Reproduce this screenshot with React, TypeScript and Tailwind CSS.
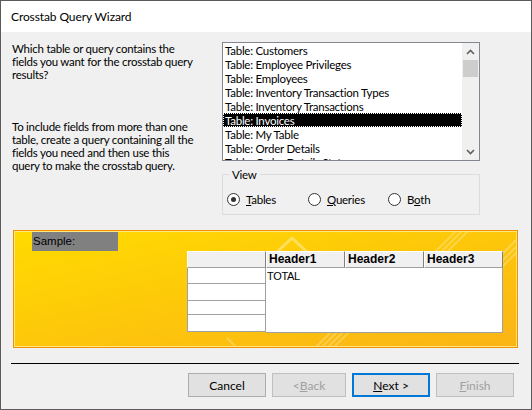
import type { ReactNode } from 'react';

const tables = [
  'Table: Customers',
  'Table: Employee Privileges',
  'Table: Employees',
  'Table: Inventory Transaction Types',
  'Table: Inventory Transactions',
  'Table: Invoices',
  'Table: My Table',
  'Table: Order Details',
  'Table: Order Details Status',
];

const Radio = ({ checked, children, width }: { checked?: boolean; children: ReactNode; width: string }) => (
  <div className={`flex items-center ${width}`}>
    <span className="flex h-[13px] w-[13px] items-center justify-center rounded-full border border-[#333] bg-white">
      {checked && <span className="h-[5px] w-[5px] rounded-full bg-[#333]" />}
    </span>
    <span className="ml-[6px]">{children}</span>
  </div>
);

const Button = ({ children, disabled, primary, width }: { children: ReactNode; disabled?: boolean; primary?: boolean; width: string }) => (
  <div
    className={`flex h-[24px] items-center justify-center bg-[#e1e1e1] ${width} ${
      primary ? 'border-2 border-[#0078d7]' : disabled ? 'border border-[#bfbfbf]' : 'border border-[#adadad]'
    } ${disabled ? 'text-[#a0a0a0]' : 'text-black'}`}
  >
    {children}
  </div>
);

const HeaderCell = ({ label }: { label?: string }) => (
  <div className="flex h-[17px] w-[79px] items-center border-b border-r border-l border-t border-b-[#a0a0a0] border-r-[#808080] border-l-white border-t-white bg-[#f0f0f0] pl-[2px] font-bold text-[12px]">
    {label}
  </div>
);

const rowHeights = ['h-[16px]', 'h-[17px]', 'h-[14px]', 'h-[17px]'];

export default function App() {
  return (
    <div className="flex h-[410px] w-[532px] flex-col overflow-hidden border border-[#5b5b5b] bg-[#f0f0f0] font-['Lato',sans-serif] text-[11.5px] leading-[13px] tracking-[-0.25px] text-black">
      <div className="flex h-[31px] shrink-0 items-center bg-white pl-[10px] text-[12px] tracking-[-0.1px]">
        Crosstab Query Wizard
      </div>

      <div className="flex flex-1 flex-col pt-[10px]">
        <div className="flex">
          <div className="w-[221px] whitespace-nowrap pl-[11px]">
            <p>
              Which table or query contains the
              <br />
              fields you want for the crosstab query
              <br />
              results?
            </p>
            <p className="mt-[39px]">
              To include fields from more than one
              <br />
              table, create a query containing all the
              <br />
              fields you need and then use this
              <br />
              query to make the crosstab query.
            </p>
          </div>

          <div className="flex w-[258px] flex-col">
            <div className="flex h-[119px] border border-[#828790] bg-white">
              <div className="flex-1 overflow-hidden">
                {tables.map((t) => (
                  <div
                    key={t}
                    className={`flex h-[14px] items-center whitespace-nowrap pl-[2px] ${
                      t === 'Table: Invoices'
                        ? 'bg-black text-white outline-1 outline-dotted outline-white -outline-offset-1'
                        : ''
                    }`}
                  >
                    {t}
                  </div>
                ))}
              </div>
              <div className="flex w-[17px] flex-col bg-[#f0f0f0]">
                <div className="flex h-[17px] items-center justify-center">
                  <svg width="9" height="6" viewBox="0 0 9 6">
                    <polyline points="1,5 4.5,1.5 8,5" fill="none" stroke="#606060" strokeWidth="1.6" />
                  </svg>
                </div>
                <div className="mx-[1px] h-[17px] bg-[#cdcdcd]" />
                <div className="flex-1" />
                <div className="flex h-[17px] items-center justify-center">
                  <svg width="9" height="6" viewBox="0 0 9 6">
                    <polyline points="1,1 4.5,4.5 8,1" fill="none" stroke="#606060" strokeWidth="1.6" />
                  </svg>
                </div>
              </div>
            </div>

            <div className="relative mt-[13px] h-[41px] border border-[#dcdcdc]">
              <span className="absolute -top-[7px] left-[6px] bg-[#f0f0f0] px-[3px]">View</span>
              <div className="flex pl-[4px] pt-[18px]">
                <Radio checked width="w-[81px]">
                  <span className="underline">T</span>ables
                </Radio>
                <Radio width="w-[80px]">
                  <span className="underline">Q</span>ueries
                </Radio>
                <Radio width="w-[70px]">
                  B<span className="underline">o</span>th
                </Radio>
              </div>
            </div>
          </div>
        </div>

        <div className="relative ml-[12px] mt-[15px] h-[118px] w-[505px] border border-[#f39200]">
          <div className="relative h-full w-full overflow-hidden border border-[#ffe680] bg-gradient-to-br from-[#ffdb00] via-[#fdc70a] to-[#fbb414]">
            <svg className="absolute inset-0" width="503" height="116" viewBox="0 0 503 116">
              <g fill="none" stroke="#fff" strokeOpacity="0.35" strokeWidth="3">
                <polyline points="262,20 277,6 292,20" />
              </g>
              <g stroke="#fff" strokeOpacity="0.25" strokeWidth="2">
                <line x1="410" y1="30" x2="440" y2="0" />
                <line x1="416" y1="30" x2="446" y2="0" />
                <line x1="422" y1="30" x2="452" y2="0" />
                <line x1="470" y1="40" x2="503" y2="6" />
                <line x1="476" y1="40" x2="503" y2="13" />
                <line x1="482" y1="40" x2="503" y2="19" />
                <line x1="300" y1="116" x2="316" y2="100" />
                <line x1="306" y1="116" x2="322" y2="100" />
                <line x1="312" y1="116" x2="328" y2="100" />
                <line x1="318" y1="116" x2="334" y2="100" />
                <line x1="222" y1="116" x2="212" y2="106" />
              </g>
            </svg>

            <div className="relative flex flex-col font-['Liberation_Sans',Arial,sans-serif] tracking-normal">
              <div className="ml-[17px] flex h-[19px] w-[86px] items-center bg-[#808080] pl-[1px] text-[11.5px]">
                Sample:
              </div>
              <div className="ml-[172px] flex">
                <div className="flex w-[79px] flex-col">
                  <HeaderCell />
                  {rowHeights.map((h, i) => (
                    <div key={i} className={`${h} border-b border-l border-r border-[#a0a0a0] bg-white`} />
                  ))}
                </div>
                <div className="flex flex-col">
                  <div className="flex">
                    <HeaderCell label="Header1" />
                    <HeaderCell label="Header2" />
                    <HeaderCell label="Header3" />
                  </div>
                  <div className="h-[65px] w-[237px] border-b border-r border-[#a0a0a0] bg-white pl-[1px] pt-[2px] text-[11px] tracking-[-0.3px]">
                    TOTAL
                  </div>
                </div>
              </div>
            </div>
          </div>
        </div>

        <div className="ml-[10px] mt-[15px] h-px w-[508px] bg-black" />

        <div className="mt-[9px] flex justify-end gap-[6px] pr-[17px] text-[12px] tracking-normal">
          <Button width="w-[78px]">Cancel</Button>
          <Button width="w-[74px]" disabled>
            &lt; <span className="underline">B</span>ack
          </Button>
          <Button width="w-[78px]" primary>
            <span className="underline">N</span>ext &gt;
          </Button>
          <Button width="w-[78px]" disabled>
            <span className="underline">F</span>inish
          </Button>
        </div>
      </div>
    </div>
  );
}
